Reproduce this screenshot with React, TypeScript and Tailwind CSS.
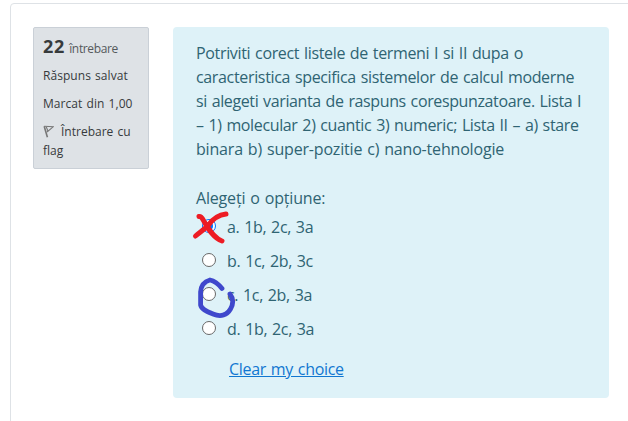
const questionLines = [
  { text: 'Potriviti corect listele de termeni I si II dupa o', spacing: 'tracking-[-0.34px]' },
  { text: 'caracteristica specifica sistemelor de calcul moderne', spacing: 'tracking-[-0.34px]' },
  { text: 'si alegeti varianta de raspuns corespunzatoare. Lista I', spacing: 'tracking-[-0.38px]' },
  { text: '– 1) molecular 2) cuantic 3) numeric; Lista II – a) stare', spacing: 'tracking-[-0.36px]' },
  { text: 'binara b) super-pozitie c) nano-tehnologie', spacing: 'tracking-[-0.18px]' },
];

const options = [
  { label: 'a. 1b, 2c, 3a', checked: true, mark: 'cross' },
  { label: 'b. 1c, 2b, 3c', checked: false, mark: '' },
  { label: 'c. 1c, 2b, 3a', checked: false, mark: 'circle' },
  { label: 'd. 1b, 2c, 3a', checked: false, mark: '' },
];

function FlagIcon() {
  return (
    <svg className="mr-[7px] inline-block h-[13px] w-[11px] align-[-2px]" viewBox="0 0 11 13" fill="none" stroke="#777" strokeWidth="1.1">
      <path d="M1.2 1.2 L4.4 12.3" strokeWidth="1.6" />
      <path d="M1.2 1.2 L10.2 1.8 L4 7 M3.3 2 L4.8 5.8" />
    </svg>
  );
}

function Radio({ checked }: { checked: boolean }) {
  return (
    <span
      className={`mb-[2px] flex size-[14px] shrink-0 items-center justify-center rounded-full border bg-white ${
        checked ? 'border-[#0075ff]' : 'border-[#686868]'
      }`}
    >
      {checked && <span className="size-2 rounded-full bg-[#0075ff]" />}
    </span>
  );
}

function Mark({ kind }: { kind: string }) {
  if (kind === 'cross') {
    return (
      <svg className="absolute left-[-5px] top-[-6px] h-[40px] w-[42px]" viewBox="0 0 42 40" fill="none" stroke="#ed1c24" strokeWidth="5" strokeLinecap="round" strokeLinejoin="round">
        <path d="M8 7.5 C11 7 12 11 14 14 C17.5 20 22.5 29 31 32" />
        <path d="M35 5 C27 6 21 11 17.5 16 C13 21 9 23 4.5 27" />
      </svg>
    );
  }
  return (
    <svg className="absolute left-0 top-[-9px] h-[48px] w-[42px]" viewBox="0 0 42 48" fill="none" stroke="#3f48cc" strokeWidth="4.8" strokeLinecap="round" strokeLinejoin="round">
      <path d="M26 14.5 C22 9.5 19 7 14 6 C8.5 7.5 5 12 4.6 18 L4.6 31 C5.5 35.5 11 37.5 17 40 C25 43.5 31 41 34.5 35 C38 29 37 24 34 20" />
    </svg>
  );
}

export default function App() {
  return (
    <main className="h-[421px] w-[628px] overflow-hidden bg-white pl-[10px] pt-[3px] font-['Open_Sans',sans-serif]">
      <div className="flex h-[440px] w-[640px] items-start gap-6 rounded border border-[#dee2e6] pl-[22px] pt-[23px]">
        <aside className="h-[142px] w-[116px] shrink-0 rounded-[2px] border border-[#cad0d7] bg-[#dee2e6] pl-[9px] pt-[6px] text-[12px] leading-[19px] text-[#373a3c]">
          <h3 className="flex h-[23px] items-baseline gap-[4px] whitespace-nowrap leading-[25px]">
            <span className="text-[18px] font-bold tracking-[0.8px]">22</span>
            <span className="tracking-[-0.35px] text-[#55595c]">întrebare</span>
          </h3>
          <p className="mt-[9px] whitespace-nowrap tracking-[0.05px] [word-spacing:1px]">Răspuns salvat</p>
          <p className="mt-[9px] whitespace-nowrap tracking-[0.05px] [word-spacing:1px]">Marcat din 1,00</p>
          <p className="mt-[9px] whitespace-nowrap [word-spacing:1px]">
            <FlagIcon />Întrebare cu<br />flag
          </p>
        </aside>
        <section className="h-[371px] w-[436px] shrink-0 rounded bg-[#def2f8] pl-[23px] pt-[14px] text-[16px] leading-6 text-[#2f6473] [word-spacing:1px]">
          <p>
            {questionLines.map((line) => (
              <span key={line.text} className={`block whitespace-nowrap ${line.spacing}`}>{line.text}</span>
            ))}
          </p>
          <p className="mt-[25px] tracking-[-0.18px]">Alegeți o opțiune:</p>
          <div className="mt-[5px]">
            {options.map((option) => (
              <label key={option.label} className="relative mb-[10px] flex h-6 items-center pl-[6px]">
                <Radio checked={option.checked} />
                <span className="ml-[11px] whitespace-nowrap tracking-[-0.34px]">{option.label}</span>
                {option.mark && <Mark kind={option.mark} />}
              </label>
            ))}
          </div>
          <a className="ml-[33px] mt-[6px] inline-block text-[#1177d1] underline tracking-[-0.32px]" href="#">Clear my choice</a>
        </section>
      </div>
    </main>
  );
}
